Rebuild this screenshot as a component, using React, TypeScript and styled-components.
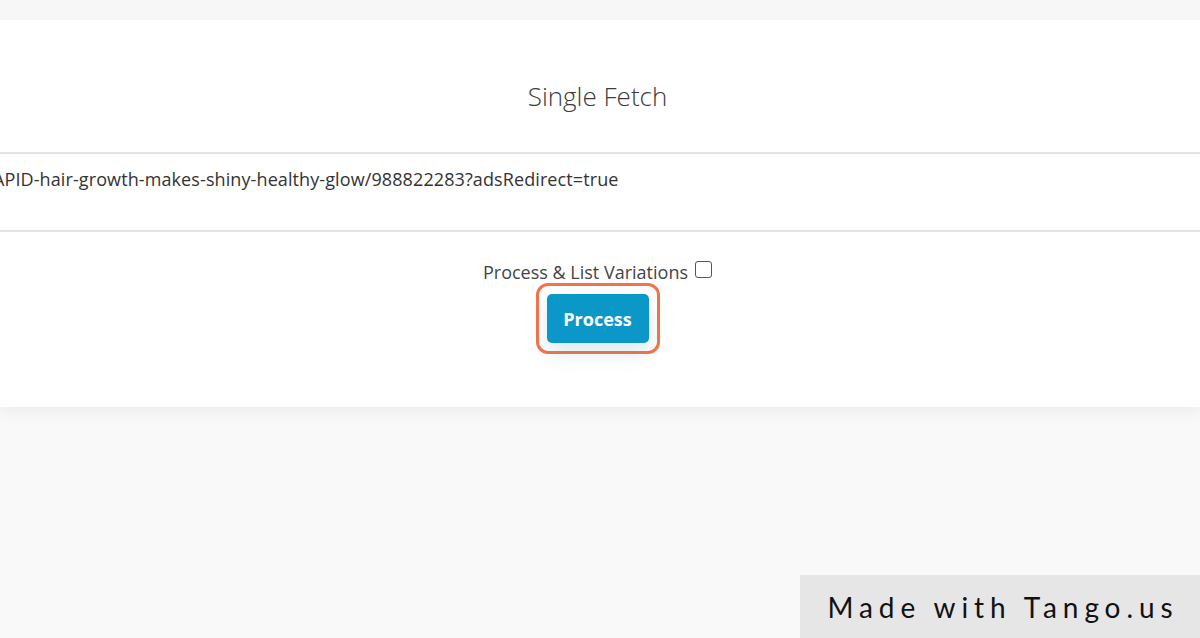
import React from "react";
import styled, { createGlobalStyle } from "styled-components";

const GlobalStyle = createGlobalStyle`
  html, body {
    margin: 0;
    padding: 0;
    background: #f9f9f9;
    font-family: "Open Sans", "Liberation Sans", sans-serif;
  }
`;

const Page = styled.div`
  width: 1200px;
  height: 638px;
  overflow: hidden;
  position: relative;
  display: flex;
  flex-direction: column;
  background: #f9f9f9;
`;

const TopBand = styled.div`
  height: 20px;
  background: #f7f7f7;
  flex-shrink: 0;
`;

const Card = styled.section`
  background: #ffffff;
  height: 387px;
  display: flex;
  flex-direction: column;
  box-shadow: 0 6px 14px rgba(0, 0, 0, 0.05);
`;

const Title = styled.h2`
  margin: 0;
  height: 134px;
  display: flex;
  align-items: center;
  justify-content: center;
  padding: 19px 5px 0 0;
  box-sizing: border-box;
  font-family: "Open Sans", sans-serif;
  font-weight: 300;
  font-size: 26px;
  color: #3c3c3c;
  border-bottom: 2px solid #e3e3e3;
`;

const UrlField = styled.div`
  height: 78px;
  box-sizing: border-box;
  border-bottom: 2px solid #e3e3e3;
  overflow: hidden;
  white-space: nowrap;
  padding-top: 13px;
  text-indent: -7px;
  letter-spacing: 0.1px;
  font-family: "Open Sans", sans-serif;
  font-size: 18px;
  color: #333;
`;

const Controls = styled.div`
  display: flex;
  flex-direction: column;
  align-items: center;
  padding: 29px 5px 0 0;
  gap: 0;
`;

const CheckLabel = styled.label`
  display: flex;
  align-items: center;
  gap: 7px;
  font-size: 18px;
  line-height: 22px;
  color: #444;
`;

const Box = styled.span`
  width: 15px;
  height: 15px;
  border: 1.5px solid #555;
  border-radius: 3px;
  background: #fff;
  margin-top: -5px;
`;

const Ring = styled.div`
  padding: 8px;
  border: 3px solid #f5734a;
  border-radius: 12px;
`;

const Button = styled.button`
  display: block;
  width: 102px;
  height: 49px;
  border: none;
  border-radius: 5px;
  background: #0b97c8;
  color: #fff;
  font-family: "Open Sans", sans-serif;
  font-weight: 700;
  font-size: 18px;
  box-shadow: 0 10px 20px rgba(11, 120, 170, 0.15);
  cursor: pointer;
`;

const Badge = styled.div`
  position: absolute;
  right: 0;
  bottom: 0;
  width: 400px;
  height: 63px;
  background: #e6e6e6;
  display: flex;
  align-items: center;
  justify-content: center;
  padding-left: 6px;
  box-sizing: border-box;
  font-family: "Lato", "Liberation Sans", sans-serif;
  font-size: 28px;
  letter-spacing: 5.9px;
  color: #111;
`;

export default function App() {
  return (
    <Page>
      <GlobalStyle />
      <TopBand />
      <Card>
        <Title>Single Fetch</Title>
        <UrlField>
          APID-hair-growth-makes-shiny-healthy-glow/988822283?adsRedirect=true
        </UrlField>
        <Controls>
          <CheckLabel>
            Process &amp; List Variations <Box />
          </CheckLabel>
          <Ring>
            <Button>Process</Button>
          </Ring>
        </Controls>
      </Card>
      <Badge>Made with Tango.us</Badge>
    </Page>
  );
}
